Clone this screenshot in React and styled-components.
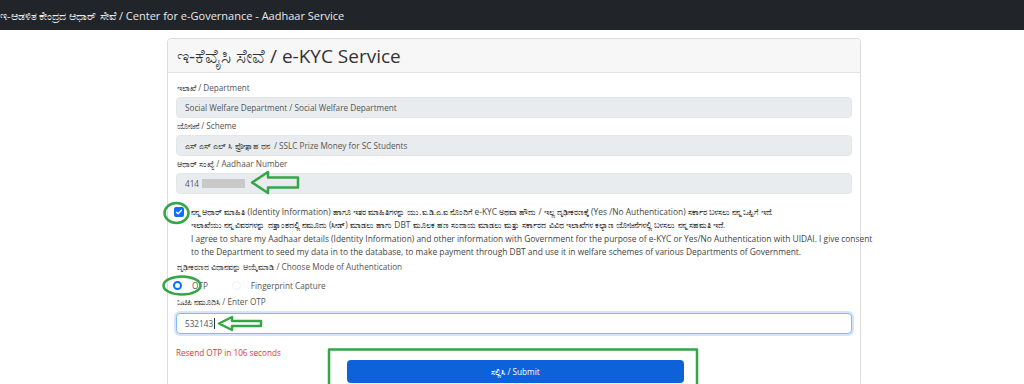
import React from 'react';
import styled, { createGlobalStyle } from 'styled-components';

const GlobalStyle = createGlobalStyle`
  html, body {
    margin: 0;
    padding: 0;
    background: #fff;
    font-family: 'Open Sans', 'Noto Sans', sans-serif;
    color: #444;
  }
  * { box-sizing: border-box; }
`;

const Page = styled.div`
  position: relative;
  width: 1024px;
  height: 384px;
  overflow: hidden;
`;

const TopBar = styled.div`
  height: 30px;
  background: #212529;
  color: #e9e9e9;
  font-size: 11px;
  display: flex;
  align-items: center;
  padding-left: 0;
  white-space: nowrap;
`;

const Card = styled.div`
  width: 694px;
  margin: 8px 0 0 167px;
  border: 1px solid #dcdcdc;
  border-radius: 4px;
  background: #fff;
`;

const CardHeader = styled.div`
  height: 34px;
  background: #f7f7f7;
  border-bottom: 1px solid #e2e2e2;
  border-radius: 4px 4px 0 0;
  display: flex;
  align-items: center;
  padding-left: 9px;
  font-size: 19px;
  color: #333;
`;

const CardBody = styled.div`
  padding: 8px 8px 0 8px;
`;

const Label = styled.div`
  height: 14px;
  line-height: 14px;
  font-size: 8.2px;
  color: #555;
  padding-left: 1px;
  margin-top: ${({ $top }) => $top || 0}px;
`;

const Field = styled.div`
  height: 21px;
  margin-top: ${({ $top }) => $top || 2}px;
  margin-bottom: 1px;
  border-radius: 4px;
  background: ${({ $focus }) => ($focus ? '#fff' : '#e9ecef')};
  border: 1px solid ${({ $focus }) => ($focus ? '#86b7fe' : '#e4e7ea')};
  box-shadow: ${({ $focus }) =>
    $focus ? '0 0 0 2px rgba(13, 110, 253, 0.18)' : 'none'};
  display: flex;
  align-items: center;
  padding-left: 8px;
  font-size: 8.2px;
  color: #555;
`;

const Masked = styled.span`
  display: inline-block;
  width: 43px;
  height: 9px;
  margin-left: 3px;
  background: #c9c9c9;
`;

const Caret = styled.span`
  display: inline-block;
  width: 1px;
  height: 11px;
  margin-left: 1px;
  background: #333;
`;

const Consent = styled.div`
  position: relative;
  margin-top: 11px;
  padding-left: 15px;
  font-size: 8.4px;
  line-height: 13.3px;
  color: #444;
`;

const ConsentLine = styled.span`
  display: block;
  white-space: nowrap;
`;

const CheckBox = styled.span`
  position: absolute;
  left: -2px;
  top: 2px;
  width: 10px;
  height: 10px;
  border-radius: 2px;
  background: #0d6efd;
  display: flex;
  align-items: center;
  justify-content: center;
`;

const RadioRow = styled.div`
  display: flex;
  align-items: center;
  height: 14px;
  margin-top: 4px;
  font-size: 8.2px;
  color: #555;
`;

const Radio = styled.span`
  width: 9px;
  height: 9px;
  border-radius: 50%;
  margin: 0 10px 0 ${({ $first }) => ($first ? -3 : 24)}px;
  border: ${({ $on }) => ($on ? '2.5px solid #0d6efd' : '1px solid #f0f0f0')};
  background: #fff;
`;

const ActionRow = styled.div`
  display: flex;
  align-items: flex-start;
  margin-top: 12px;
  height: 40px;
`;

const ResendCol = styled.div`
  width: 25%;
  font-size: 8.2px;
  line-height: 14px;
  color: #dc3545;
`;

const SubmitCol = styled.div`
  width: 50%;
  padding-left: 2px;
`;

const SubmitButton = styled.button`
  width: 337px;
  height: 23px;
  margin-top: 14px;
  border: none;
  border-radius: 4px;
  background: #0d62d9;
  color: #fff;
  font-family: inherit;
  font-size: 8.2px;
`;

const Overlay = styled.svg`
  position: absolute;
  left: 0;
  top: 0;
  pointer-events: none;
`;

const green = '#35a546';

export default function App() {
  return (
    <Page>
      <GlobalStyle />
      <TopBar>ಇ-ಆಡಳಿತ ಕೇಂದ್ರದ ಆಧಾರ್ ಸೇವೆ / Center for e-Governance - Aadhaar Service</TopBar>
      <Card>
        <CardHeader>ಇ-ಕೆವೈಸಿ ಸೇವೆ / e-KYC Service</CardHeader>
        <CardBody>
          <Label>ಇಲಾಖೆ / Department</Label>
          <Field>Social Welfare Department / Social Welfare Department</Field>
          <Label>ಯೋಜನೆ / Scheme</Label>
          <Field>ಎಸ್ ಎಸ್ ಎಲ್ ಸಿ ಪ್ರೋತ್ಸಾಹ ಧನ &nbsp;/ SSLC Prize Money for SC Students</Field>
          <Label>ಆಧಾರ್ ಸಂಖ್ಯೆ / Aadhaar Number</Label>
          <Field>
            414
            <Masked />
          </Field>
          <Consent>
            <CheckBox>
              <svg width="8" height="8" viewBox="0 0 16 16">
                <path d="M3 8.5l3.2 3L13 4.5" fill="none" stroke="#fff" strokeWidth="2.6" strokeLinecap="round" strokeLinejoin="round" />
              </svg>
            </CheckBox>
            <ConsentLine>
              ನನ್ನ ಆಧಾರ್ ಮಾಹಿತಿ (Identity Information) ಹಾಗೂ ಇತರ ಮಾಹಿತಿಗಳನ್ನು ಯು.ಐ.ಡಿ.ಎ.ಐ ನೊಂದಿಗೆ e-KYC ಅಥವಾ ಹೌದು / ಇಲ್ಲ ದೃಢೀಕರಣಕ್ಕೆ (Yes /No Authentication) ಸರ್ಕಾರ ಬಳಸಲು ನನ್ನ ಒಪ್ಪಿಗೆ ಇದೆ.
            </ConsentLine>
            <ConsentLine>
              ಇಲಾಖೆಯು ನನ್ನ ವಿವರಗಳನ್ನು ದತ್ತಾಂಶದಲ್ಲಿ ನಮೂದು (ಸೀಡ್) ಮಾಡಲು ಹಾಗು DBT ಮೂಲಕ ಹಣ ಸಂದಾಯ ಮಾಡಲು ಮತ್ತು ಸರ್ಕಾರದ ವಿವಿಧ ಇಲಾಖೆಗಳ ಕಲ್ಯಾಣ ಯೋಜನೆಗಳಲ್ಲಿ ಬಳಸಲು ನನ್ನ ಸಹಮತಿ ಇದೆ.
            </ConsentLine>
            <ConsentLine>
              I agree to share my Aadhaar details (Identity Information) and other information with Government for the purpose of e-KYC or Yes/No Authentication with UIDAI. I give consent
            </ConsentLine>
            <ConsentLine>
              to the Department to seed my data in to the database, to make payment through DBT and use it in welfare schemes of various Departments of Government.
            </ConsentLine>
          </Consent>
          <Label $top={2}>ದೃಢೀಕರಣದ ವಿಧಾನವನ್ನು ಆಯ್ಕೆಮಾಡಿ / Choose Mode of Authentication</Label>
          <RadioRow>
            <Radio $on $first />
            OTP
            <Radio />
            Fingerprint Capture
          </RadioRow>
          <Label $top={3}>ಒಟಿಪಿ ನಮೂದಿಸಿ / Enter OTP</Label>
          <Field $focus $top={4}>
            532143
            <Caret />
          </Field>
          <ActionRow>
            <ResendCol>Resend OTP in 106 seconds</ResendCol>
            <SubmitCol>
              <SubmitButton>ಸಲ್ಲಿಸಿ / Submit</SubmitButton>
            </SubmitCol>
          </ActionRow>
        </CardBody>
      </Card>

      <Overlay width="1024" height="384" viewBox="0 0 1024 384">
        <g fill="none" stroke={green} strokeWidth="2.5" strokeLinejoin="round">
          <path d="M252 182.5 L268 172 L268 177.5 L298 177.5 L298 187.5 L268 187.5 L268 193 Z" />
          <ellipse cx="176.5" cy="213" rx="12" ry="10" />
          <ellipse cx="182" cy="285.5" rx="18.5" ry="9" />
          <path d="M219 323.5 L232 317 L232 321 L261 321 L261 326 L232 326 L232 330 Z" />
          <rect x="329" y="349.5" width="368" height="40" />
        </g>
      </Overlay>
    </Page>
  );
}
